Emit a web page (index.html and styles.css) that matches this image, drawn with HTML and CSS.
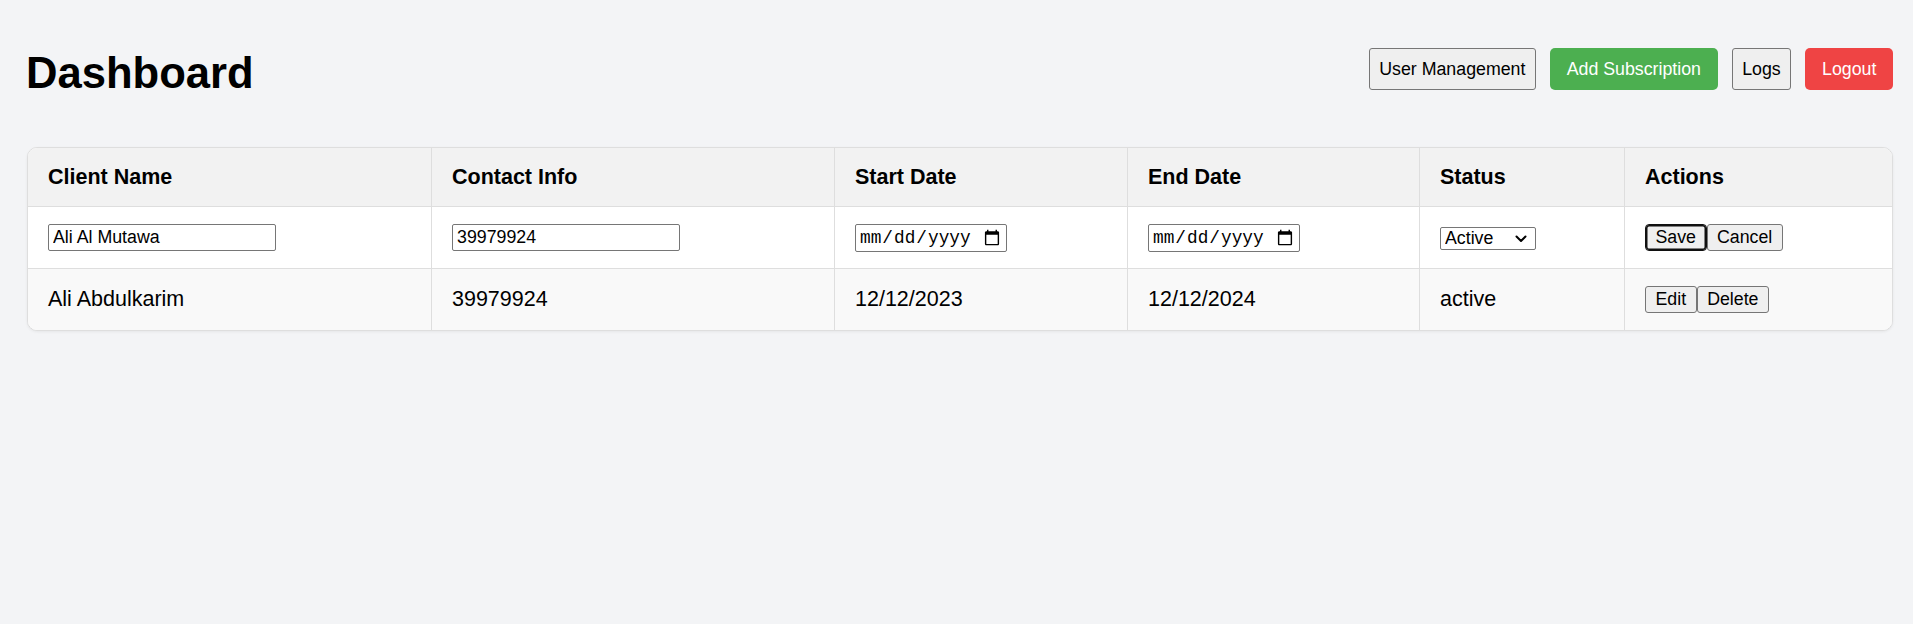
FILE: index.html
```html
<!DOCTYPE html>
<html lang="en">
<head>
<meta charset="utf-8">
<title>Dashboard</title>
<link rel="stylesheet" href="styles.css">
</head>
<body>
<div class="page">
  <header class="topbar">
    <h1 class="title">Dashboard</h1>
    <nav class="nav">
      <button class="nav-btn">User Management</button>
      <button class="nav-btn nav-btn--green">Add Subscription</button>
      <button class="nav-btn">Logs</button>
      <button class="nav-btn nav-btn--red">Logout</button>
    </nav>
  </header>

  <div class="table-card">
    <table class="subs">
      <thead>
        <tr>
          <th class="c-name">Client Name</th>
          <th class="c-contact">Contact Info</th>
          <th class="c-start">Start Date</th>
          <th class="c-end">End Date</th>
          <th class="c-status">Status</th>
          <th class="c-actions">Actions</th>
        </tr>
      </thead>
      <tbody>
        <tr class="row-edit">
          <td><input class="field" type="text" value="Ali Al Mutawa"></td>
          <td><input class="field" type="text" value="39979924"></td>
          <td><input class="date" type="date"></td>
          <td><input class="date" type="date"></td>
          <td>
            <span class="select-wrap">
              <select class="status-select">
                <option selected>Active</option>
                <option>Inactive</option>
              </select>
              <svg class="chevron" width="12" height="8" viewBox="0 0 12 8" aria-hidden="true"><path d="M1.5 1.5 L6 6 L10.5 1.5" fill="none" stroke="#000" stroke-width="2" stroke-linecap="round" stroke-linejoin="round"/></svg>
            </span>
          </td>
          <td><button class="mini-btn mini-btn--focus">Save</button><button class="mini-btn">Cancel</button></td>
        </tr>
        <tr class="row-data">
          <td>Ali Abdulkarim</td>
          <td>39979924</td>
          <td>12/12/2023</td>
          <td>12/12/2024</td>
          <td>active</td>
          <td><button class="mini-btn">Edit</button><button class="mini-btn">Delete</button></td>
        </tr>
      </tbody>
    </table>
  </div>
</div>
</body>
</html>
```

FILE: styles.css
```css
* { box-sizing: border-box; }

html, body {
  margin: 0;
  background: #f3f4f6;
  font-family: "Liberation Sans", Arial, sans-serif;
  color: #000;
}

.page {
  padding: 48px 20px 40px 27px;
}

.topbar {
  display: flex;
  justify-content: space-between;
  align-items: flex-start;
  margin-bottom: 49px;
}

.title {
  margin: 0 0 0 -1px;
  font-size: 43.6px;
  font-weight: bold;
  line-height: 50px;
}

.nav {
  display: flex;
  gap: 14.3px;
}

.nav-btn {
  font-family: "Liberation Sans", Arial, sans-serif;
  font-size: 17.78px;
  line-height: 20.4px;
  padding: 10px 9.3px;
  border: 1px solid #767676;
  border-radius: 3px;
  background: #efefef;
  color: #000;
}

.nav-btn--green,
.nav-btn--red {
  border: none;
  padding: 11px 16.67px;
  border-radius: 5px;
  color: #fff;
}

.nav-btn--green { background: #4caf50; }
.nav-btn--red { background: #ef4444; }

.table-card {
  background: #fff;
  border: 1px solid #dedede;
  border-radius: 10px;
  overflow: hidden;
  box-shadow: 0 1px 3px rgba(0, 0, 0, 0.06);
}

.subs {
  width: 100%;
  border-collapse: separate;
  border-spacing: 0;
  table-layout: fixed;
  font-size: 21.5px;
}

.subs th,
.subs td {
  text-align: left;
  vertical-align: middle;
  padding: 16px 20px;
  border-right: 1px solid #dedede;
  border-bottom: 1px solid #dedede;
}

.subs th:last-child,
.subs td:last-child { border-right: none; }

.subs tbody tr:last-child td { border-bottom: none; }

.subs th {
  height: 59px;
  background: #f2f2f2;
  font-weight: bold;
}

.c-name { width: 404px; }
.c-contact { width: 403px; }
.c-start { width: 293px; }
.c-end { width: 292px; }
.c-status { width: 205px; }
.c-actions { width: 267px; }

.row-edit td {
  height: 62px;
  background: #fff;
}

.row-data td {
  height: 61px;
  background: #f9f9f9;
}

.field {
  width: 228px;
  height: 27px;
  padding: 1px 4px;
  font-family: "Liberation Sans", Arial, sans-serif;
  font-size: 17.78px;
  border: 1px solid #767676;
  border-radius: 2px;
  background: #fff;
  color: #000;
}

.date {
  width: 152px;
  height: 28px;
  padding: 1px 3px;
  font-family: "Liberation Mono", monospace;
  font-size: 17.78px;
  border: 1px solid #767676;
  border-radius: 2px;
  background: #fff;
  color: #000;
}

.select-wrap {
  position: relative;
  display: inline-block;
  vertical-align: middle;
}

.status-select {
  display: block;
  width: 96px;
  height: 23px;
  padding: 0 24px 0 4px;
  font-family: "Liberation Sans", Arial, sans-serif;
  font-size: 17.78px;
  line-height: 21px;
  border: 1px solid #767676;
  border-radius: 2px;
  background: #fff;
  color: #000;
  -webkit-appearance: none;
  appearance: none;
}

.chevron {
  position: absolute;
  right: 9px;
  top: 8px;
  pointer-events: none;
}

.mini-btn {
  margin: 0;
  font-family: "Liberation Sans", Arial, sans-serif;
  font-size: 17.78px;
  line-height: 20.4px;
  padding: 2.5px 9.5px;
  border: 1px solid #767676;
  border-radius: 3px;
  background: #efefef;
  color: #000;
  vertical-align: middle;
}

.mini-btn--focus {
  border-color: #101010;
  box-shadow: inset 0 0 0 1.5px #101010;
  border-radius: 4px;
}
```
